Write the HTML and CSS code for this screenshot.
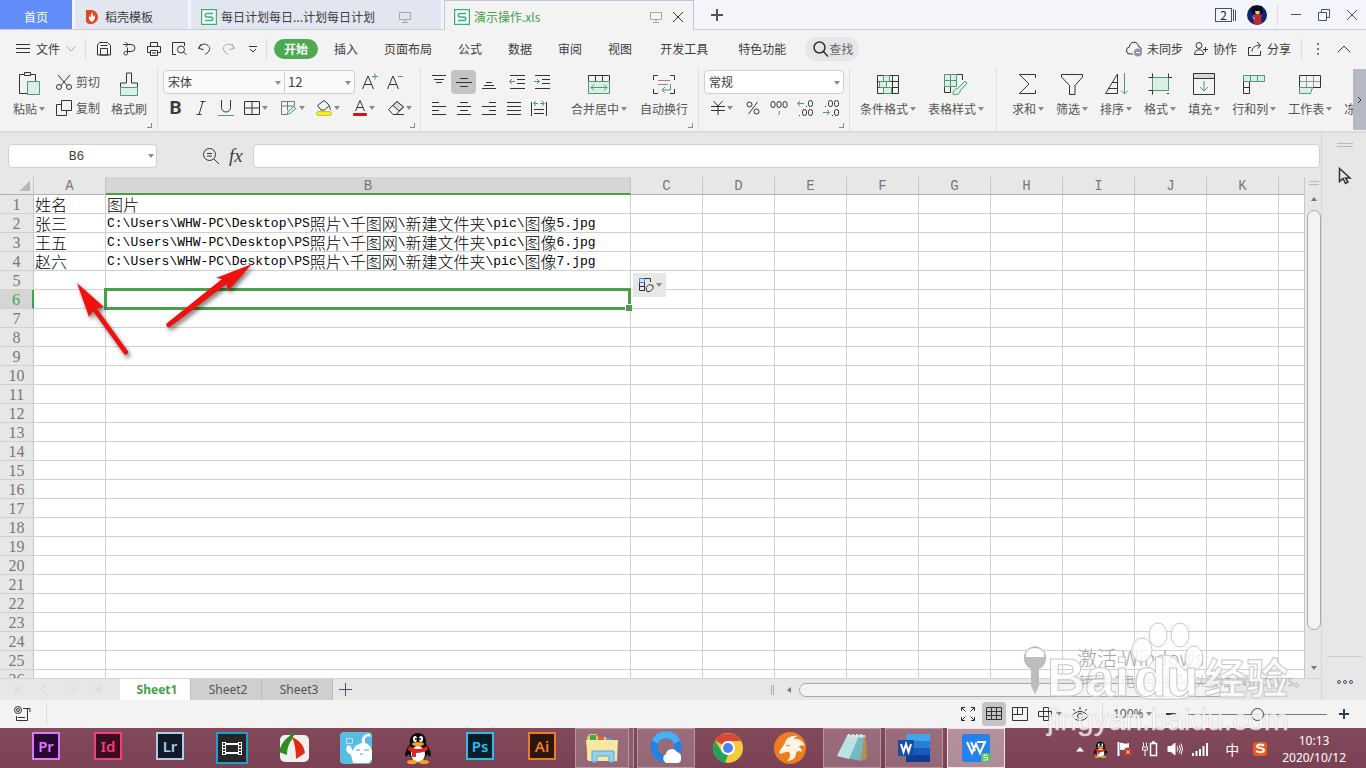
FILE: index.html
```html
<!DOCTYPE html>
<html lang="zh-CN">
<head>
    <meta charset="UTF-8">
    <meta name="viewport" content="width=device-width, initial-scale=1.0">
    <title>演示操作.xls</title>
    <link rel="stylesheet" href="styles.css">
</head>
<body>
    <!-- title bar -->
    <header class="titlebar">
        <button class="tab tab-home">首页</button>
        <button class="tab tab-docer">
            <svg width="14" height="16" viewBox="0 0 14 16"><path d="M1 1h5a7 7 0 0 1 7 7 7 7 0 0 1-7 7H5a4 4 0 0 1-4-4z" fill="#e8441c"/><path d="M7 13C3 11 4 8 4 7l2 2c-1-3 1-5 1-6 1 2 1 4 1 5l2-2c0 3 0 5-3 7z" fill="#fff"/></svg>
            <span>稻壳模板</span>
        </button>
        <button class="tab tab-file">
            <svg width="16" height="16" viewBox="0 0 16 16" class="logo-s"><path d="M.5.5h15v15H.5z"/><path d="M12 4.5H6a1.700 1.700 0 0 0 0 3.500h4a1.700 1.700 0 0 1 0 3.500H4"/></svg>
            <span>每日计划每日...计划每日计划</span>
            <svg width="12" height="12" viewBox="0 0 12 12" class="ic pale screen"><path d="M.5 1.500h11v7H.5zM6 8.500v3M3 11.500h6"/></svg>
        </button>
        <button class="tab tab-file active">
            <svg width="16" height="16" viewBox="0 0 16 16" class="logo-s"><path d="M.5.5h15v15H.5z"/><path d="M12 4.500H6a1.700 1.700 0 0 0 0 3.500h4a1.700 1.700 0 0 1 0 3.500H4"/></svg>
            <span>演示操作.xls</span>
            <svg width="12" height="12" viewBox="0 0 12 12" class="ic pale screen"><path d="M.5 1.500h11v7H.5zM6 8.500v3M3 11.500h6"/></svg>
            <svg width="12" height="12" viewBox="0 0 12 12" class="ic"><path d="M1 1l10 10M11 1L1 11"/></svg>
        </button>
        <button class="tab-add" aria-label="新建">
            <svg width="12" height="12" viewBox="0 0 12 12"><path d="M6 0v12M0 6h12" stroke="#555" stroke-width="2"/></svg>
        </button>
        <div class="window-tools">
            <button class="windows">
                <span>2</span>
                <svg width="5" height="14" viewBox="0 0 5 14" class="ic navy"><path d="M1.500 1v12M3.500 2v11"/></svg>
            </button>
            <button class="avatar" aria-label="账号">
                <svg width="20" height="20" viewBox="0 0 20 20"><circle cx="10" cy="10" r="10" fill="#10246f"/><path d="M5 1h10l1 6-3 2H7L4 7z" fill="#0b0b20"/><path d="M8 6h5l-1 4H9z" fill="#eac4a8"/><path d="M6 10l4-1 5 1-1 4 1 4-4 2-5-2 1-3z" fill="#b92c38"/><path d="M5 11l3 2-1 2z" fill="#e3a592"/></svg>
            </button>
            <i class="sep"></i>
            <button aria-label="最小化"><svg width="12" height="12" viewBox="0 0 12 12" class="ic navy"><path d="M1 5.500h10"/></svg></button>
            <button aria-label="还原"><svg width="12" height="12" viewBox="0 0 12 12" class="ic navy"><path d="M.5 3.500h8v8h-8zM3.500 3.500v-3h8v8h-3"/></svg></button>
            <button aria-label="关闭"><svg width="12" height="12" viewBox="0 0 12 12" class="ic navy"><path d="M1 1l10 10M11 1L1 11"/></svg></button>
        </div>
    </header>

    <!-- menu -->
    <nav class="menubar">
        <button class="file-menu">
            <svg width="14" height="12" viewBox="0 0 14 12" class="ic"><path d="M0 1.500h14M0 5.500h14M0 9.500h14"/></svg>
            <span>文件</span>
            <svg width="10" height="6" viewBox="0 0 10 6" class="ic pale"><path d="M.5.5L5 5 9.500.5"/></svg>
        </button>
        <div class="quick">
            <button aria-label="保存"><svg width="16" height="16" viewBox="0 0 16 16" class="ic"><path d="M1.500 14V4l2-2.500h8l3 3V14zM4.500 14V7.500h7V14M4.500 4.500h7M4 14h8"/></svg></button>
            <button aria-label="输出为PDF"><svg width="16" height="16" viewBox="0 0 16 16" class="ic"><path d="M2 3.500h8a4 3.500 0 0 1 0 7H4.500a1.800 1.800 0 1 0 2 2V6.500M4.500 1L7 3.500 4.500 6"/></svg></button>
            <button aria-label="打印"><svg width="16" height="16" viewBox="0 0 16 16" class="ic"><path d="M4.500 5V1.500h7V5M4 11.500H1.500v-6h13v6H12M4.500 9.500h7v5h-7zM6 12h4"/></svg></button>
            <button aria-label="打印预览"><svg width="16" height="16" viewBox="0 0 16 16" class="ic"><path d="M5 13.500H1.500v-12h12V5"/><circle cx="10" cy="8.500" r="3.500"/><path d="M12.500 11l3 3"/></svg></button>
            <button aria-label="撤销"><svg width="16" height="16" viewBox="0 0 16 16" class="ic"><path d="M5 3L2.500 7.500l5 1M3 7c2-4 6-5 9-2.500s2 6-3 9"/></svg></button>
            <button aria-label="恢复"><svg width="16" height="16" viewBox="0 0 16 16" class="ic pale"><path d="M11 3l2.500 4.500-5 1M13 7c-2-4-6-5-9-2.500s-2 6 3 9"/></svg></button>
            <button aria-label="更多"><svg width="10" height="10" viewBox="0 0 10 10" class="ic"><path d="M1 2.500h8M2 5l3 3 3-3"/></svg></button>
        </div>
        <div class="menus">
            <button class="current">开始</button>
            <button>插入</button>
            <button>页面布局</button>
            <button>公式</button>
            <button>数据</button>
            <button>审阅</button>
            <button>视图</button>
            <button class="wide">开发工具</button>
            <button class="wide">特色功能</button>
            <button class="search">
                <svg width="16" height="16" viewBox="0 0 16 16" class="ic bold"><circle cx="6.500" cy="6.500" r="5.500"/><path d="M10.500 10.500l4.500 5"/></svg>
                <span>查找</span>
            </button>
        </div>
        <div class="share">
            <button><svg width="17" height="16" viewBox="0 0 17 16" class="ic"><path d="M7 13H4.500A3.500 3.500 0 0 1 3.500 6a4.500 4.500 0 0 1 9-.5 3.500 3.500 0 0 1 3 3"/><circle cx="12" cy="11.500" r="4" fill="#8e96ad" stroke="none"/><path d="M10 11.500h4" stroke="#fff"/></svg>未同步</button>
            <button><svg width="16" height="16" viewBox="0 0 16 16" class="ic"><circle cx="6" cy="4.500" r="3"/><path d="M1.500 13.500c0-6 8-6 9-1.500v1.500zM10 8.500h5M12.500 6v5"/></svg>协作</button>
            <button><svg width="16" height="16" viewBox="0 0 16 16" class="ic"><path d="M4 6.500H1.500v8h12V10M5 10.500c0-4 3-6 8-6.500M10 1L13.500 4 11 7.500"/></svg>分享</button>
            <i class="sep"></i>
            <button class="dots" aria-label="更多选项"><svg width="4" height="14" viewBox="0 0 4 14" fill="#555"><circle cx="2" cy="2" r="1"/><circle cx="2" cy="7" r="1"/><circle cx="2" cy="12" r="1"/></svg></button>
            <button aria-label="折叠功能区"><svg width="14" height="8" viewBox="0 0 14 8" class="ic"><path d="M.5 7.500L7 1l6.500 6.500"/></svg></button>
        </div>
    </nav>

    <!-- ribbon -->
    <section class="ribbon">
        <div class="group clip">
            <button class="big">
                <svg width="24" height="26" viewBox="0 0 24 26" class="ic"><path d="M8 3.500H2.500v19H10M14 3.500h4.500V10M7.500 1.500h6v3h-6z"/><path class="g" d="M10.500 10.500h12v13h-12z"/></svg>
                <span class="drop">粘贴</span>
            </button>
            <div class="stack">
                <button class="mini"><svg width="16" height="16" viewBox="0 0 16 16" class="ic"><path d="M2 1l9.500 11M14 1L4.500 12"/><circle cx="3" cy="13" r="2.500"/><circle cx="13" cy="13" r="2.500"/></svg>剪切</button>
                <button class="mini"><svg width="16" height="16" viewBox="0 0 16 16" class="ic"><path d="M5.500.5h10v10h-10zM5 4.500H.5v11h10V11"/></svg>复制</button>
            </div>
            <button class="big">
                <svg width="24" height="26" viewBox="0 0 24 26" class="ic"><path d="M3.500 16v-4h6v-10h5v10h6v4"/><path class="g" d="M3.500 16.500h17v8h-17z"/></svg>
                <span>格式刷</span>
            </button>
            <i class="corner"></i>
        </div>

        <div class="group fonts">
            <div class="stack">
                <div class="row">
                    <label class="pick font"><select aria-label="字体"><option>宋体</option></select></label>
                    <label class="pick size"><select aria-label="字号"><option>12</option></select></label>
                    <button class="tool grow" aria-label="增大字号"><svg width="18" height="18" viewBox="0 0 18 18" class="ic"><path d="M1.500 16L7 3l5.500 13M3.500 11.500h7"/><path class="gl" d="M11 3.500h6M14 .5v6"/></svg></button>
                    <button class="tool" aria-label="减小字号"><svg width="18" height="18" viewBox="0 0 18 18" class="ic"><path d="M1.500 16L7 3l5.500 13M3.500 11.500h7"/><path class="gl" d="M12 3.500h5"/></svg></button>
                </div>
                <div class="row">
                    <button class="tool b" aria-label="加粗"><b>B</b></button>
                    <button class="tool" aria-label="倾斜"><svg width="16" height="16" viewBox="0 0 16 16" class="ic"><path d="M7.500 1.500h5M3.500 14.500h5M10 1.500l-4 13"/></svg></button>
                    <button class="tool" aria-label="下划线"><svg width="16" height="16" viewBox="0 0 16 16" class="ic"><path d="M3.500 0v7.500a4.500 4.500 0 0 0 9 0V0"/><path class="gl" d="M0 15.500h16"/></svg></button>
                    <button class="tool drop" aria-label="边框"><svg width="16" height="16" viewBox="0 0 16 16" class="ic"><path d="M.5 1.500h15v13H.5zM8 1.500v13M.5 8h15"/></svg></button>
                    <button class="tool drop" aria-label="绘图边框"><svg width="17" height="16" viewBox="0 0 17 16" class="ic"><path d="M7 14.500H1.500v-13h13V6M1.500 6h13M7.500 1.500v9" stroke="#777"/><path class="g" d="M7 14.500l1-3 6-5 2 2-6 5z"/></svg></button>
                    <button class="tool drop" aria-label="填充颜色"><svg width="16" height="16" viewBox="0 0 16 16" class="ic"><path d="M1.500 5.500L8 .5l5.500 5-5 4.500H5z"/><path d="M13 6c1 2 2 3 1 4"/><rect x=".5" y="11.500" width="15" height="4" rx="2" fill="#f4ee22" stroke="#c9c432"/></svg></button>
                    <button class="tool drop" aria-label="字体颜色"><svg width="14" height="16" viewBox="0 0 14 16" class="ic"><path d="M2.500 11L7 .5 11.500 11M4 7.500h6"/><rect y="13" width="14" height="3" rx="1" fill="#dd1111" stroke="none"/></svg></button>
                    <button class="tool drop" aria-label="清除"><svg width="16" height="16" viewBox="0 0 16 16" class="ic"><path d="M.5 9.500L9 1.500l6.500 5.500-7.500 7.500H5z"/><path d="M5 5.500l6 5.500 4.500-4L9 1.500z" fill="#ddd"/><path d="M5 14.500h11"/></svg></button>
                </div>
            </div>
            <i class="corner"></i>
        </div>

        <div class="group">
            <div class="stack">
                <div class="row">
                    <button class="tool" aria-label="顶端对齐"><svg width="16" height="16" viewBox="0 0 16 16" class="ic"><path d="M1 1.500h14M3 5.500h10M5 8.500h6"/></svg></button>
                    <button class="tool on" aria-label="垂直居中"><svg width="16" height="16" viewBox="0 0 16 16" class="ic"><path d="M4 4.500h8M0 8.500h16M4 12.500h8"/></svg></button>
                    <button class="tool" aria-label="底端对齐"><svg width="16" height="16" viewBox="0 0 16 16" class="ic"><path d="M5 8.500h6M3 11.500h10M1 14.500h14"/></svg></button>
                    <button class="tool indent" aria-label="减少缩进"><svg width="16" height="16" viewBox="0 0 16 16" class="ic"><path d="M1 1.500h15M8 5.500h8M8 9.500h8M1 14.500h15"/><path class="gl" d="M6 7.500H.5M3 5L.5 7.500 3 10"/></svg></button>
                    <button class="tool" aria-label="增加缩进"><svg width="16" height="16" viewBox="0 0 16 16" class="ic"><path d="M1 1.500h15M8 5.500h8M8 9.500h8M1 14.500h15"/><path class="gl" d="M0 7.500h5.500M3 5l2.500 2.500L3 10"/></svg></button>
                </div>
                <div class="row">
                    <button class="tool" aria-label="左对齐"><svg width="16" height="16" viewBox="0 0 16 16" class="ic"><path d="M1 2.500h7M1 6.500h14M1 10.500h7M1 14.500h14"/></svg></button>
                    <button class="tool" aria-label="居中"><svg width="16" height="16" viewBox="0 0 16 16" class="ic"><path d="M4 2.500h8M1 6.500h14M4 10.500h8M1 14.500h14"/></svg></button>
                    <button class="tool" aria-label="右对齐"><svg width="16" height="16" viewBox="0 0 16 16" class="ic"><path d="M8 2.500h7M1 6.500h14M8 10.500h7M1 14.500h14"/></svg></button>
                    <button class="tool" aria-label="两端对齐"><svg width="16" height="16" viewBox="0 0 16 16" class="ic"><path d="M1 2.500h14M1 6.500h14M1 10.500h14M1 14.500h14"/></svg></button>
                    <button class="tool" aria-label="分散对齐"><svg width="16" height="16" viewBox="0 0 16 16" class="ic"><path d="M.5 2v14M15.500 2v14M3 9.500h10M3 13.500h10"/><path class="gl" d="M3 3.500h4M5 1L2.500 3.500 5 6M9 3.500h4M11 1l2.500 2.500L11 6"/></svg></button>
                </div>
            </div>
            <button class="big merge">
                <svg width="24" height="26" viewBox="0 0 24 26" class="ic"><path d="M1.500 10V4.500h21V10M8.500 4.500V10M15.500 4.500V10"/><path class="g" d="M1.500 10.500h21v12h-21z"/><path class="gl" d="M4 16.500h16M7 13.500l-3 3 3 3M17 13.500l3 3-3 3"/></svg>
                <span class="drop">合并居中</span>
            </button>
            <button class="big wrap">
                <svg width="24" height="26" viewBox="0 0 24 26" class="ic"><path d="M1.500 9V4.500H6M18 4.500h4.500V9M1.500 18v4.500H6M18 22.500h4.500V18"/><path d="M6 9.500h12M6 13.500h10" stroke="#a67a86"/><path class="gl" d="M18.500 13v6H10M13 16l-3 3 3 3"/></svg>
                <span>自动换行</span>
            </button>
            <i class="corner"></i>
        </div>

        <div class="group">
            <div class="stack">
                <div class="row">
                    <label class="pick format"><select aria-label="数字格式"><option>常规</option></select></label>
                </div>
                <div class="row nums">
                    <button class="tool drop" aria-label="货币"><svg width="14" height="16" viewBox="0 0 14 16" class="ic"><path d="M2.500 1L7 6l4.500-5M0 6.500h14M0 10.500h14M7 6v9"/></svg></button>
                    <button class="tool" aria-label="百分比"><svg width="14" height="16" viewBox="0 0 14 16" class="ic"><circle cx="3.500" cy="4.500" r="2.500"/><circle cx="10.500" cy="11.500" r="2.500"/><path d="M11.500 2l-9 12"/></svg></button>
                    <button class="tool" aria-label="千位分隔"><svg width="18" height="16" viewBox="0 0 18 16" class="ic"><rect x="1" y="1.500" width="4" height="6" rx="2"/><rect x="7" y="1.500" width="4" height="6" rx="2"/><rect x="13" y="1.500" width="4" height="6" rx="2"/><path class="gl" d="M9.500 11v2l-1 2"/></svg></button>
                    <button class="tool" aria-label="增加小数位"><svg width="18" height="18" viewBox="0 0 18 18" class="ic"><path class="gl" d="M8 4.500H2M4 2L1.500 4.500 4 7"/><path d="M10 7.500h1M3 16.500h1"/><rect x="12.500" y="1.500" width="4" height="6" rx="2"/><rect x="6.500" y="10.500" width="4" height="6" rx="2"/><rect x="12.500" y="10.500" width="4" height="6" rx="2"/></svg></button>
                    <button class="tool" aria-label="减少小数位"><svg width="18" height="18" viewBox="0 0 18 18" class="ic"><path class="gl" d="M1 13.500h6M5 11l2.500 2.500L5 16"/><path d="M3 7.500h1M10 16.500h1"/><rect x="6.500" y="1.500" width="4" height="6" rx="2"/><rect x="12.500" y="1.500" width="4" height="6" rx="2"/><rect x="12.500" y="10.500" width="4" height="6" rx="2"/></svg></button>
                </div>
            </div>
            <i class="corner"></i>
        </div>

        <div class="group styles">
            <button class="big">
                <svg width="24" height="26" viewBox="0 0 24 26" class="ic"><path d="M1.500 4.500h21v18h-21zM1.500 10.500h21M1.500 16.500h21M7.500 4.500v18M16.500 4.500v18"/><path class="g" d="M7.500 4.500h6v6h-6zM3.500 10.500h7v6h-7zM7.500 16.500h8v6h-8z"/></svg>
                <span class="drop">条件格式</span>
            </button>
            <button class="big">
                <svg width="26" height="26" viewBox="0 0 26 26" class="ic"><path d="M1.500 16v5.500h6V16M14 3.500h5.500V9"/><path class="g" d="M1.500 3.500h12v12h-12zM7.500 3.500v12M1.500 9.500h12"/><path class="g" d="M10 23.500c0-4 2-6 4.500-6L22 10l2 2-7 8c0 3-3 4-7 3.500z"/></svg>
                <span class="drop">表格样式</span>
            </button>
        </div>

        <div class="group last">
            <button class="big">
                <svg width="24" height="26" viewBox="0 0 24 26" class="ic"><path d="M19.500 7V3.500h-16L13 13 3.500 22.500h16V19"/></svg>
                <span class="drop">求和</span>
            </button>
            <button class="big">
                <svg width="24" height="26" viewBox="0 0 24 26" class="ic"><path d="M1.500 3.500h21V6L15 14.500v9H9.500v-9L1.500 6z"/></svg>
                <span class="drop">筛选</span>
            </button>
            <button class="big">
                <svg width="24" height="26" viewBox="0 0 24 26" class="ic"><path d="M1.500 22.500L13.500 3v19.500zM4 17.500h9.500M8 11.500h5.500"/><path class="gl" d="M20.500 2v21M17 19.500l3.500 3.500 3.500-3.500"/></svg>
                <span class="drop">排序</span>
            </button>
            <button class="big">
                <svg width="24" height="26" viewBox="0 0 24 26" class="ic"><path class="g" d="M4.500 6.500h16v13h-16z"/><path d="M.5 6.500h4v-4M20.500 2.500v4h3.500M.5 19.500h4v4M19 22.500h2"/></svg>
                <span class="drop">格式</span>
            </button>
            <button class="big">
                <svg width="24" height="26" viewBox="0 0 24 26" class="ic"><path d="M1.500 2.500h21v21h-21z"/><path d="M1.500 2.500h21v5h-21z" fill="#d8d8d8"/><path class="gl" d="M12 10v10M8 16l4 4 4-4"/></svg>
                <span class="drop">填充</span>
            </button>
            <button class="big">
                <svg width="24" height="26" viewBox="0 0 24 26" class="ic"><path d="M1.500 10v12.500h6V10M1.500 16.500h6"/><path class="g" d="M1.500 4.500h21v6h-21zM8.500 4.500v6M15.500 4.500v6"/></svg>
                <span class="drop">行和列</span>
            </button>
            <button class="big">
                <svg width="24" height="26" viewBox="0 0 24 26" class="ic"><path d="M8.500 4.500v12M15.500 4.500v12M1.500 10.500h21" stroke="#999"/><path d="M1.500 16V4.500h21v12H15"/><path class="g" d="M1.500 16.500h13l-2 6h-11z"/></svg>
                <span class="drop">工作表</span>
            </button>
            <button class="big">
                <svg width="24" height="26" viewBox="0 0 24 26"></svg>
                <span class="drop">冻结窗格</span>
            </button>
        </div>
        <button class="ribbon-next" aria-label="向右滚动"><svg width="5" height="8" viewBox="0 0 5 8" class="ic"><path d="M1 1l3 3-3 3"/></svg></button>
    </section>

    <main class="main">
        <div class="workspace">
            <div class="formula">
                <label class="namebox"><input type="text" value="B6" aria-label="名称框"></label>
                <svg width="18" height="18" viewBox="0 0 18 18" class="ic lens"><circle cx="7.500" cy="7.500" r="6"/><path d="M12 12l5 5M5 6.500h5M5 9h5"/></svg>
                <span class="fx">fx</span>
                <input class="formula-input" type="text" aria-label="编辑栏">
            </div>

            <div class="sheet">
                <div class="cells">
                    <table class="grid">
                        <colgroup><col class="c-num"><col class="c-a"><col class="c-b"><col span="9" class="c-a"><col></colgroup>
                        <thead><tr id="gridHead"></tr></thead>
                        <tbody id="gridBody"></tbody>
                    </table>
                </div>
                <div class="vscroll">
                    <i class="grip"></i>
                    <i class="arrow up"></i>
                    <i class="thumb"></i>
                    <i class="arrow down"></i>
                </div>
            </div>

            <div class="sheetbar">
                <div class="sheet-nav">
                    <svg width="100" height="10" viewBox="0 0 100 10" class="ic"><path d="M6 .5v9M12 .5L8 5l4 4.500M36 .5L31 5l5 4.500M60 .5L65 5l-5 4.500M84 .5L88 5l-4 4.500M90 .5v9"/></svg>
                </div>
                <button class="sheet-tab current">Sheet1</button>
                <button class="sheet-tab">Sheet2</button>
                <button class="sheet-tab">Sheet3</button>
                <button class="sheet-add" aria-label="新建工作表"><svg width="13" height="13" viewBox="0 0 13 13" class="ic navy"><path d="M6.500 0v13M0 6.500h13"/></svg></button>
                <div class="hscroll"><i class="vgrip"></i><i class="arrow left"></i><i class="thumb"></i></div>
            </div>
        </div>

        <aside class="sidepane">
            <i class="grip"></i>
            <svg width="14" height="18" viewBox="0 0 14 18" class="ic bold cursor"><path d="M1.500 1.500v13l3.500-3 2.500 5 2.500-1.500L7.500 11H12z"/></svg>
            <button class="more" aria-label="更多"><svg width="18" height="6" viewBox="0 0 18 6" class="ic navy"><circle cx="3" cy="3" r="1.500"/><circle cx="9" cy="3" r="1.500"/><circle cx="15" cy="3" r="1.500"/></svg></button>
        </aside>
    </main>

    <!-- status bar -->
    <footer class="status">
        <svg width="18" height="16" viewBox="0 0 18 16" class="ic"><circle cx="4" cy="4" r="3.500"/><circle cx="4" cy="4" r="1.500"/><path d="M9 2.500h7V6M13.500 2.500v12M2.500 10v4.500h11M4 11.500h7"/></svg>
        <i class="sep"></i>
        <div class="status-tools">
            <button aria-label="全屏"><svg width="16" height="16" viewBox="0 0 16 16" class="ic"><path d="M1.500 5V1.500H5M1.500 1.500l4 4M11 1.500h3.500V5M14.500 1.500l-4 4M1.500 11v3.500H5M1.500 14.500l4-4M11 14.500h3.500V11M14.500 14.500l-4-4"/></svg></button>
            <button class="on" aria-label="普通视图"><svg width="16" height="14" viewBox="0 0 16 14" class="ic"><path d="M.5.5h15v12H.5zM.5 4.500h15M.5 8.500h15M5.500.5v12M10.500.5v12"/></svg></button>
            <button class="page" aria-label="页面视图"><svg width="16" height="14" viewBox="0 0 16 14" class="ic"><path d="M.5.5h15v13H.5zM5.500.5v7M10.500.5v7M.5 7.500h10"/></svg></button>
            <button class="drop" aria-label="阅读模式"><svg width="16" height="14" viewBox="0 0 16 14" class="ic"><path d="M5.500.5h5v13h-5zM.5 4.500h13v5H.5z"/></svg></button>
            <button class="eye" aria-label="护眼模式"><svg width="18" height="16" viewBox="0 0 18 16" class="ic"><path d="M1 10c4-6 12-6 16 0-4 6-12 6-16 0zM2 3l2 2M9 1v3M16 3l-2 2"/><circle cx="9" cy="10" r="2.500"/></svg></button>
            <i class="sep"></i>
            <button class="drop zoom">100%</button>
            <button aria-label="缩小"><svg width="12" height="12" viewBox="0 0 12 12"><path d="M1 6h10" stroke="#2d3f5a" stroke-width="2"/></svg></button>
            <input type="range" class="zoom-range" min="0" max="100" value="50" aria-label="显示比例">
            <button aria-label="放大"><svg width="12" height="12" viewBox="0 0 12 12"><path d="M1 6h10M6 1v10" stroke="#2d3f5a" stroke-width="2"/></svg></button>
        </div>
    </footer>

    <!-- taskbar -->
    <div class="taskbar">
        <button class="app adobe pr">Pr</button>
        <button class="app adobe id">Id</button>
        <button class="app adobe lr">Lr</button>
        <button class="app" aria-label="视频工具"><svg width="32" height="32" viewBox="0 0 32 32"><path d="M1 1h30v30H1z" fill="#262626" stroke="#1ba0cf" stroke-width="2"/><path d="M6 10h4v13H6zM22 10h4v13h-4z" fill="#fff"/><path d="M10 12h12M10 21h12" stroke="#fff" stroke-width="2"/><path d="M8 11v12M24 11v12" stroke="#262626" stroke-width="2" stroke-dasharray="2 1"/></svg></button>
        <button class="app" aria-label="截图工具"><svg width="32" height="32" viewBox="0 0 32 32"><rect x="2" y="3" width="29" height="27" rx="5" fill="#f1efee"/><path d="M14 3C7 6 3 12 1 20l8 3c0-7 2-12 6-17z" fill="#2d8d21"/><path d="M14 5c7 3 12 8 13 16l-9 6c0-8-1-15-4-22z" fill="#e22a13"/><path d="M11 7l5-6" stroke="#2d8d21" stroke-width="3"/></svg></button>
        <button class="app" aria-label="桌面助手"><svg width="32" height="32" viewBox="0 0 32 32"><rect width="32" height="32" rx="4" fill="#59bde3"/><path d="M13 31l-2-8-4-3c-2-5 1-9 4-5l2 4c1-5 5-7 9-8-1-6 3-10 8-9l1 3c-4-2-7 1-6 6 4 1 6 4 7 8v8l-3 4z" fill="#fff"/><path d="M16 18h4M24 18h5M20 22h3" stroke="#419dc4"/><path d="M6.500 6.500h6v5h-6z" fill="none" stroke="#b9e3f4"/></svg></button>
        <button class="app" aria-label="QQ"><svg width="28" height="32" viewBox="0 0 28 32"><use href="#penguin"/></svg></button>
        <button class="app adobe ps">Ps</button>
        <button class="app adobe ai">Ai</button>
        <button class="app open stacked" aria-label="文件资源管理器"><svg width="34" height="32" viewBox="0 0 34 32"><path d="M2 5l3-3h6l2 3h8v3h11v20H2z" fill="#e5cb73"/><path d="M5 3h6v5H5z" fill="#42a747"/><path d="M13 5h6v5h-6z" fill="#e95d3a"/><path d="M21 6h5v4h-5z" fill="#4f9fe4"/><path d="M1 8h32l-1 21H3z" fill="#f7e7a1"/><path d="M7 30V19h22v11h-5v-6H12v6z" fill="#93d3ee" stroke="#5aa9cd"/></svg></button>
        <button class="app open" aria-label="QQ浏览器"><svg width="34" height="34" viewBox="0 0 34 34"><circle cx="17" cy="16" r="12" fill="none" stroke="#2381e8" stroke-width="7"/><path d="M6 11a12 12 0 0 1 22 0" fill="none" stroke="#48aef6" stroke-width="7"/><path d="M17 32a5 5 0 0 1 0-9 6 6 0 0 1 11-2 5 5 0 0 1 4 6 4 4 0 0 1-3 5z" fill="#fff"/></svg></button>
        <button class="app" aria-label="Chrome"><svg width="30" height="30" viewBox="0 0 30 30"><circle cx="15" cy="15" r="15" fill="#f7ca3d"/><path d="M15 15L2 7.500A15 15 0 0 1 28 8H15z" fill="#d9483b"/><path d="M2 7.500L9 19l6 3-3 8A15 15 0 0 1 2 7.500z" fill="#24a25a"/><circle cx="15" cy="15" r="7" fill="#fff"/><circle cx="15" cy="15" r="5" fill="#4a83ef"/></svg></button>
        <button class="app" aria-label="UC浏览器"><svg width="32" height="32" viewBox="0 0 32 32"><circle cx="16" cy="16" r="16" fill="#ef7d20"/><path d="M5 20l6-9c1-5 6-8 13-7-3 1-4 2-4 3 5-1 9 2 11 7-3-1-5-1-6 1 2 1 3 3 3 5-3-2-6-1-6 2 0 4-4 7-9 7 3-3 4-6 2-9-3-1-6 2-9 2z" fill="#fff3e6"/><path d="M12 13l4 1" stroke="#ef7d20"/></svg></button>
        <button class="app open" aria-label="记事本"><svg width="32" height="30" viewBox="0 0 32 30"><path d="M11 3h19l1 22-4 3z" fill="#b68d54"/><path d="M11 3h17l-3 25-24-5z" fill="#76b7c1"/><path d="M11 3h12L13 26 1 23z" fill="#bce3e4"/><path d="M11 3h18M13 1v4M17 1v4M21 1v4M25 1v4" stroke="#dcdedf" stroke-width="2"/></svg></button>
        <button class="app open" aria-label="Word"><svg width="34" height="30" viewBox="0 0 34 30"><path d="M9 1h24v7H9z" fill="#41a5ee"/><path d="M9 8h24v7H9z" fill="#2b7cd3"/><path d="M9 15h24v7H9z" fill="#185abd"/><path d="M9 22h24v7H9z" fill="#103f91"/><path d="M1 7h16v16H1z" fill="#154fa8"/><path d="M4 11l2.500 8L9 11l2.500 8 2.500-8" fill="none" stroke="#fff" stroke-width="2"/></svg></button>
        <button class="app open focus" aria-label="WPS"><svg width="30" height="30" viewBox="0 0 30 30"><rect x="1" y="1" width="28" height="28" rx="3" fill="#2382ee"/><path d="M6 9l5 11 4-9 4 9 5-11h-8M10 9l4 9" fill="none" stroke="#fff" stroke-width="2"/><rect x="20" y="20" width="9" height="9" rx="2" fill="#57bf5c"/><path d="M27 22h-4v2.500h3.500V27H22" fill="none" stroke="#fff"/></svg></button>

        <div class="tray">
            <svg width="8" height="5" viewBox="0 0 8 5"><path d="M4 0l4 4.500H0z" fill="#fff"/></svg>
            <svg width="15" height="17" viewBox="0 0 28 32"><use href="#penguin"/></svg>
            <svg width="16" height="16" viewBox="0 0 16 16"><path d="M1.500 1v14" stroke="#fff" stroke-width="2"/><path d="M3 2c3-1 4 2 9 0v7c-4 2-6-1-9 0z" fill="#fff"/><circle cx="11" cy="11" r="4.500" fill="#cf3529"/><path d="M9 9l4 4M13 9l-4 4" stroke="#fff"/></svg>
            <svg width="16" height="16" viewBox="0 0 16 16" fill="none" stroke="#fff"><path d="M8.500 2.500h6v12h-6zM10 1h3" stroke-width="1.500"/><path d="M1.500 1.500v4M4.500 1.500v4M.5 6h5v3h-5zM3 9v6"/></svg>
            <svg width="16" height="16" viewBox="0 0 16 16" fill="none" stroke="#fff"><path d="M1 5.500h3L8 2v12l-4-3.500H1z" fill="#fff"/><path d="M10 5.500q2 2.500 0 5M12 4q3 4 0 8M14 2.500q3 5.500 0 11"/></svg>
            <svg width="16" height="14" viewBox="0 0 16 14" stroke="#fff" stroke-width="2"><path d="M1 14v-3M4.500 14V9M8 14V7M11.500 14V4M15 14V1"/></svg>
            <span class="ime">中</span>
            <svg width="16" height="16" viewBox="0 0 16 16"><rect x="1" y="1" width="14" height="14" rx="3" fill="#ec5a24"/><path d="M12 4.500c-3-1.500-7-1-7 1s7 1 7 3.500-5 3-8 1" fill="none" stroke="#fff" stroke-width="2"/></svg>
            <time class="clock"><span>10:13</span><span>2020/10/12</span></time>
        </div>
    </div>

    <!-- red pointers over the cells -->
    <svg class="pointers" width="280" height="380" viewBox="0 0 280 380">
        <path d="M77 283l27 24-7 1.500 31.500 43.500q-1 3.500-4 2.500L93 311l-4 6z"/>
        <path d="M252 264l-24 27-1.500-7-57 43.500q-4 0-3-4L222 279l-6-1z"/>
    </svg>

    <svg class="watermark" width="290" height="130" viewBox="0 0 290 130">
        <g class="activate">
            <path d="M20 30a12 12 0 0 0-4 23v17l4 8 4-8V53a12 12 0 0 0-4-23z"/>
            <path d="M11 41h18v-3a9 6 0 0 0-18 0z" fill="#fff"/>
            <text x="62" y="50" class="act-big">激活 Windows</text>
            <text x="64" y="70" class="act-small">转到“电脑设置”以激活 Windows。</text>
        </g>
        <g class="brand">
            <ellipse cx="127" cy="34" rx="10" ry="12"/>
            <ellipse cx="143" cy="19" rx="9" ry="12"/>
            <ellipse cx="165" cy="19" rx="9" ry="12"/>
            <ellipse cx="179" cy="42" rx="9" ry="12"/>
            <path d="M150 39c12 0 14 12 24 19s8 24-8 25c-8 0-24 0-32 0-16-1-18-18-8-25s12-19 24-19z"/>
            <text x="32" y="80" class="brand-latin">Bai</text>
            <text x="119" y="80" class="brand-latin">du</text>
            <text x="189" y="78" class="brand-cjk">经验</text>
        </g>
        <text x="32" y="114" class="site">jingyan.baidu.com</text>
    </svg>

    <svg class="defs" width="0" height="0">
        <symbol id="penguin" viewBox="0 0 28 32">
            <path d="M14 1c6 0 9 5 8 11 4 5 6 11 4 13l-3-3c-1 4-5 7-9 7s-8-3-9-7l-3 3c-2-2 0-8 4-13C5 6 8 1 14 1z" fill="#0c0c0c"/>
            <ellipse cx="14" cy="22" rx="7" ry="8" fill="#fff"/>
            <path d="M5 14c6 4 12 4 18 0l1 4c-4 2-7 3-12 3v4H8v-5l-4-2z" fill="#e02424"/>
            <ellipse cx="11" cy="7" rx="2" ry="3" fill="#fff"/><ellipse cx="17" cy="7" rx="2" ry="3" fill="#fff"/>
            <circle cx="12" cy="7" r="1"/><circle cx="16" cy="7" r="1"/>
            <ellipse cx="14" cy="12" rx="6" ry="2" fill="#f5a51c"/>
            <ellipse cx="8" cy="30" rx="5" ry="2" fill="#f5a51c"/><ellipse cx="20" cy="30" rx="5" ry="2" fill="#f5a51c"/>
        </symbol>
    </svg>

    <script>
        const columns = ['A', 'B', 'C', 'D', 'E', 'F', 'G', 'H', 'I', 'J', 'K', ''];
        const folder = 'C:\\Users\\WHW-PC\\Desktop\\PS照片\\千图网\\新建文件夹\\pic\\';
        const data = {
            1: ['姓名', '图片'],
            2: ['张三', folder + '图像5.jpg'],
            3: ['王五', folder + '图像6.jpg'],
            4: ['赵六', folder + '图像7.jpg']
        };
        const rowCount = 26;
        const selected = { column: 'B', row: 6 };

        // half-width characters get their own size so that two match one full-width
        function cellHtml(text) {
            return text.replace(/[\x20-\x7e]+/g, '<span class="half">$&</span>');
        }

        const pasteButton = '<button class="paste-options" aria-label="粘贴选项">' +
            '<svg width="16" height="16" viewBox="0 0 16 16" class="ic"><path d="M1.500 5v8.500H7M6 1.500h6.500V5M1.500 9.500H6M6.500 5v8"/>' +
            '<path d="M1.500 1.500h5v4h-5z" fill="#cfe0fb" stroke="#4f7fd0"/><path d="M8 10.500l3-3 4 1v3l-3 3h-3z"/></svg></button>';

        document.getElementById('gridHead').innerHTML = '<th class="all"></th>' + columns.map(name =>
            `<th class="${name === selected.column ? 'selected' : ''}">${name}</th>`).join('');

        let html = '';
        for (let r = 1; r <= rowCount; r++) {
            const values = data[r] || [];
            html += `<tr><th class="${r === selected.row ? 'selected' : ''}">${r}</th>`;
            columns.forEach((name, i) => {
                if (name === selected.column && r === selected.row) {
                    html += `<td class="active-cell">${pasteButton}</td>`;
                } else {
                    html += `<td>${cellHtml(values[i] || '')}</td>`;
                }
            });
            html += '</tr>';
        }
        document.getElementById('gridBody').innerHTML = html;
    </script>
</body>
</html>
```
FILE: styles.css
```css
* {
    box-sizing: border-box;
}

body {
    margin: 0;
    height: 100vh;
    display: flex;
    flex-direction: column;
    overflow: hidden;
    position: relative;
    background-color: #f3f3f3;
    color: #3c3c3c;
    font-family: "Noto Sans CJK SC", sans-serif;
    font-size: 12px;
    line-height: 16px;
}

button, input, select {
    font: inherit;
    color: inherit;
    border: 0;
    margin: 0;
    padding: 0;
    background: none;
}

button {
    display: flex;
    align-items: center;
    justify-content: center;
    white-space: nowrap;
    flex-shrink: 0;
}

svg {
    display: block;
    flex-shrink: 0;
}

.defs {
    position: absolute;
}

/* icons */
.ic {
    fill: none;
    stroke: #333;
    stroke-width: 1;
}

.ic.bold {
    stroke-width: 1.5;
}

.ic.pale {
    stroke: #a3a6ae;
}

.ic.navy {
    stroke: #46516e;
}

.ic .g {
    fill: #dcefe4;
    stroke: #4f9a72;
}

.ic .gl {
    stroke: #4f9a72;
}

.logo-s {
    fill: #fff;
    stroke: #35b07d;
    stroke-width: 1.5;
}

.sep {
    width: 1px;
    height: 22px;
    background-color: #dcdcdc;
}

.drop::after {
    content: "";
    border: 3px solid transparent;
    border-top: 4px solid #8a8a8a;
    border-bottom: 0;
    margin-left: 2px;
    flex-shrink: 0;
}

/* title bar */
.titlebar {
    height: 30px;
    display: flex;
    background-color: #f3f5fa;
    border-bottom: 1px solid #c5ccda;
    flex-shrink: 0;
}

.tab {
    justify-content: flex-start;
    background-color: #e2e6f0;
    margin-right: 3px;
    padding: 4px 10px 0;
    gap: 4px;
}

.tab-home {
    width: 72px;
    justify-content: center;
    background-color: #628df8;
    color: #fff;
}

.tab-docer {
    width: 113px;
    gap: 6px;
}

.tab-file {
    width: 250px;
}

.tab.active {
    height: 30px;
    background-color: #f3f3f3;
    border: 1px solid #bfc6d6;
    border-bottom: 0;
    color: #45a045;
    padding: 3px 9px 0;
    margin-right: 0;
}

.screen {
    margin-left: auto;
    margin-right: 20px;
}

.active .screen {
    margin-right: 6px;
}

.tab-add {
    width: 46px;
}

.window-tools {
    margin-left: auto;
    display: flex;
    align-items: center;
    gap: 16px;
    padding-right: 8px;
}

.windows span {
    width: 17px;
    height: 14px;
    border: 1px solid #46516e;
    color: #222;
    line-height: 12px;
}

.window-tools .avatar {
    margin-left: -6px;
    margin-right: -6px;
}

.window-tools .sep {
    margin-right: -4px;
}

/* menu */
.menubar {
    height: 38px;
    display: flex;
    align-items: center;
    flex-shrink: 0;
}

.file-menu {
    gap: 6px;
    padding: 0 9px 0 16px;
    height: 22px;
    border-right: 1px solid #dcdcdc;
}

.quick {
    display: flex;
    padding: 0 1px 0 5px;
    border-right: 1px solid #dcdcdc;
    height: 22px;
}

.quick button {
    width: 25px;
}

.quick button:last-child {
    width: 24px;
}

.menus {
    display: flex;
    align-items: center;
    padding-left: 7px;
}

.menus button {
    height: 20px;
    padding: 0 13px;
}

.menus .wide {
    padding: 0 15px;
}

.menus .current {
    background-color: #4cab50;
    border-radius: 10px;
    color: #fff;
    font-weight: bold;
    padding: 0 10px;
    margin-right: 3px;
}

.menus .search {
    height: 24px;
    padding: 0 6px 0 8px;
    margin-left: 4px;
    border-radius: 12px;
    background-color: #e5e6e9;
    color: #666;
}

.share {
    margin-left: auto;
    display: flex;
    align-items: center;
    gap: 10px;
    padding-right: 15px;
}

.share button {
    gap: 4px;
}

.share .dots {
    margin: 0 7px 0 4px;
}

/* ribbon */
.ribbon {
    height: 65px;
    display: flex;
    overflow: hidden;
    position: relative;
    border-bottom: 2px solid #dadada;
    flex-shrink: 0;
}

.group {
    display: flex;
    position: relative;
    padding: 1px 5px 0;
    border-right: 1px solid #dfdfdf;
    flex-shrink: 0;
}

.clip {
    width: 158px;
    padding-left: 13px;
    gap: 11px;
}

.fonts {
    padding-right: 2px;
}

.corner {
    position: absolute;
    right: 5px;
    bottom: 3px;
    width: 5px;
    height: 5px;
    border-right: 1px solid #888;
    border-bottom: 1px solid #888;
}

.stack {
    display: flex;
    flex-direction: column;
}

.row {
    display: flex;
    height: 26px;
    align-items: center;
}

.big {
    flex-direction: column;
    justify-content: flex-start;
    color: #555;
    padding-top: 2px;
    gap: 4px;
}

.big span {
    display: flex;
    align-items: center;
}

.mini {
    height: 26px;
    gap: 4px;
    color: #555;
}

.tool {
    width: 25px;
    height: 24px;
}

.tool.drop {
    width: 36px;
}

.tool.on, .status .on {
    background-color: #c4c4c4;
    border-radius: 4px;
}

.tool.b {
    font-family: Roboto, sans-serif;
    font-size: 19px;
}

.grow {
    margin-left: 2px;
}

.indent {
    margin-left: 3px;
}

.merge {
    margin-left: 17px;
}

.wrap {
    margin: 0 5px 0 13px;
}

.nums .tool {
    width: 26px;
}

.nums .drop {
    width: 36px;
}

.styles {
    gap: 12px;
    padding: 1px 12px 0 10px;
}

.last {
    gap: 12px;
    padding-left: 15px;
    border-right: 0;
}

.pick {
    position: relative;
    height: 24px;
    background-color: #fafafa;
    border: 1px solid #cfcfcf;
    border-radius: 4px;
}

.pick::after, .namebox::after {
    content: "";
    position: absolute;
    right: 3px;
    top: 10px;
    border: 3px solid transparent;
    border-top: 4px solid #8a8a8a;
    border-bottom: 0;
}

.pick select {
    appearance: none;
    width: 100%;
    height: 100%;
    padding-left: 4px;
}

.font {
    width: 122px;
    border-radius: 4px 0 0 4px;
}

.size {
    width: 70px;
    border-left: 0;
    border-radius: 0 4px 4px 0;
}

.size select {
    padding-left: 3px;
    font-size: 13px;
}

.format {
    width: 140px;
    background-color: #fff;
}

.ribbon-next {
    position: absolute;
    right: 0;
    top: 1px;
    width: 13px;
    height: 61px;
    background-color: #b5b9c3;
}

/* workspace */
.main {
    flex: 1;
    min-height: 0;
    display: flex;
    background-color: #e7e7e7;
}

.workspace {
    flex: 1;
    min-width: 0;
    display: flex;
    flex-direction: column;
}

.formula {
    display: flex;
    align-items: center;
    height: 44px;
    padding: 2px 1px 0 8px;
    flex-shrink: 0;
}

.namebox {
    position: relative;
    width: 149px;
    height: 24px;
}

.namebox input {
    width: 100%;
    height: 100%;
    padding-right: 12px;
    background-color: #fff;
    border: 1px solid #d0d0d0;
    border-radius: 4px;
    text-align: center;
    font-family: "Liberation Mono", monospace;
    font-size: 13px;
}

.lens {
    margin-left: 45px;
}

.fx {
    margin-left: 9px;
    width: 24px;
    font-family: "Liberation Serif", serif;
    font-style: italic;
    font-size: 19px;
}

.formula-input {
    flex: 1;
    height: 24px;
    padding: 0 6px;
    background-color: #fff;
    border: 1px solid #d0d0d0;
    border-radius: 4px;
}

.sheet {
    flex: 1;
    min-height: 0;
    display: flex;
}

.cells {
    flex: 1;
    min-width: 0;
    overflow: hidden;
    border-right: 1px solid #c8c8c8;
}

.grid {
    width: 100%;
    table-layout: fixed;
    border-collapse: separate;
    border-spacing: 0;
    background-color: #fff;
}

.c-num {
    width: 34px;
}

.c-a {
    width: 72px;
}

.c-b {
    width: 525px;
}

.grid th {
    height: 19px;
    padding: 2px 0 0;
    background-color: #e7e7e7;
    border-right: 1px solid #c6c6c6;
    border-bottom: 1px solid #d0d0d0;
    color: #777;
    font-family: "Liberation Serif", serif;
    font-size: 16px;
    line-height: 16px;
    font-weight: normal;
}

.grid thead th {
    height: 18px;
    line-height: 15px;
    border-bottom-color: #b0b0b0;
    font-family: "Liberation Mono", monospace;
    font-size: 14px;
}

.grid .all {
    background-image: linear-gradient(135deg, transparent 50%, #b8b8b8 50%);
    background-size: 11px 11px;
    background-position: right 3px bottom 3px;
    background-repeat: no-repeat;
}

.grid thead .selected {
    background-color: #d5d5d5;
    border-bottom: 2px solid #4a9f4a;
    line-height: 14px;
}

.grid tbody .selected {
    background-color: #d5d5d5;
    border-right: 2px solid #4a9f4a;
    color: #45a045;
}

.grid td {
    height: 19px;
    padding: 1px 0 0 1px;
    border-right: 1px solid #d0d0d0;
    border-bottom: 1px solid #d0d0d0;
    color: #000;
    font-size: 16px;
    line-height: 17px;
    font-weight: 300;
    white-space: nowrap;
}

.grid tr > :last-child {
    border-right: 0;
}

.half {
    font-family: "Liberation Mono", monospace;
    font-size: 13px;
    line-height: 17px;
    vertical-align: top;
}

.active-cell {
    position: relative;
}

.active-cell::before {
    content: "";
    position: absolute;
    inset: -2px -1px -2px -2px;
    border: 3px solid #4a9f4a;
}

.active-cell::after {
    content: "";
    position: absolute;
    right: -2px;
    bottom: -3px;
    width: 6px;
    height: 6px;
    background-color: #4a9f4a;
    border-top: 1px solid #fff;
    border-left: 1px solid #fff;
}

.paste-options {
    position: absolute;
    left: calc(100% + 3px);
    top: -17px;
    width: 33px;
    height: 24px;
    background-color: #e7e7e7;
}

.paste-options::after {
    content: "";
    margin-left: 2px;
    border: 3px solid transparent;
    border-top: 4px solid #8a8a8a;
    border-bottom: 0;
}

/* scrollbars */
.grip {
    height: 4px;
    border-top: 1px solid #b8b8b8;
    border-bottom: 1px solid #b8b8b8;
}

.arrow {
    border: 3px solid transparent;
}

.arrow.up {
    border-top: 0;
    border-bottom: 4px solid #777;
}

.arrow.down {
    border-bottom: 0;
    border-top: 4px solid #777;
}

.arrow.left {
    border-left: 0;
    border-right: 4px solid #777;
}

.vscroll {
    width: 16px;
    padding: 4px 1px 8px 2px;
    display: flex;
    flex-direction: column;
    align-items: center;
}

.vscroll .grip {
    width: 10px;
    margin-bottom: 12px;
}

.vscroll .thumb {
    width: 14px;
    flex: 1;
    margin: 9px 0 36px;
    background-color: #f3f3f3;
    border: 1px solid #a8a8a8;
    border-radius: 7px;
}

.sheetbar {
    height: 22px;
    display: flex;
    flex-shrink: 0;
    border-top: 1px solid #d4d4d4;
}

.sheet-nav {
    width: 120px;
    padding: 5px 10px;
    opacity: 0.1;
}

.sheet-tab {
    width: 71px;
    padding-left: 4px;
    background-color: #cfcfcf;
    border-right: 1px solid #bcbcbc;
    color: #555;
    font-family: "Noto Sans", sans-serif;
}

.sheet-tab.current {
    background-color: #fff;
    color: #45a045;
    font-weight: bold;
}

.sheet-add {
    width: 24px;
}

.hscroll {
    flex: 1;
    display: flex;
    align-items: center;
    justify-content: flex-end;
    padding-right: 91px;
}

.vgrip {
    width: 3px;
    height: 10px;
    margin-right: 13px;
    border-left: 1px solid #b0b0b0;
    border-right: 1px solid #b0b0b0;
}

.hscroll .thumb {
    width: 33%;
    min-width: 431px;
    height: 14px;
    margin-left: 8px;
    background-color: #f3f3f3;
    border: 1px solid #a8a8a8;
    border-radius: 7px;
}

.sidepane {
    width: 45px;
    padding: 10px 4px 15px 5px;
    border-left: 1px solid #d6d6d6;
    display: flex;
    flex-direction: column;
    align-items: center;
    flex-shrink: 0;
}

.sidepane .grip {
    width: 16px;
}

.cursor {
    margin-top: 20px;
}

.more {
    margin-top: auto;
    width: 100%;
    padding-top: 22px;
    border-top: 1px solid #cdcdcd;
}

/* status bar */
.status {
    height: 28px;
    display: flex;
    align-items: center;
    padding: 0 16px 0 14px;
    gap: 14px;
    flex-shrink: 0;
}

.status-tools {
    margin-left: auto;
    display: flex;
    align-items: center;
    gap: 2px;
}

.status-tools button {
    width: 24px;
    height: 24px;
}

.status-tools button.drop {
    width: 32px;
}

.status-tools .eye {
    margin-right: 8px;
}

.status-tools button.zoom {
    width: 52px;
    color: #555;
    font-family: "Noto Sans", sans-serif;
    justify-content: flex-start;
    padding-left: 8px;
}

.status-tools button:last-child {
    width: 12px;
}

.zoom-range {
    appearance: none;
    width: 139px;
    height: 14px;
    margin: 0 9px 0 3px;
    background: linear-gradient(#777, #777) center / 100% 1px no-repeat;
}

.zoom-range::-webkit-slider-thumb {
    appearance: none;
    width: 13px;
    height: 13px;
    border: 1px solid #444;
    border-radius: 50%;
    background-color: #f3f3f3;
}

/* taskbar */
.taskbar {
    height: 40px;
    display: flex;
    gap: 4px;
    padding-left: 17px;
    background: linear-gradient(#834a5c, #794153);
    flex-shrink: 0;
}

.app {
    width: 58px;
    border: 1px solid transparent;
}

.app.open {
    background-color: rgba(255, 255, 255, 0.2);
    border-color: #b795a1;
}

.app.stacked {
    width: 54px;
    margin-right: 4px;
    box-shadow: 4px 0 0 #8d5c6d, 5px 0 0 #b795a1;
}

.app.focus {
    background-color: rgba(255, 255, 255, 0.4);
    border-color: #efe4e8;
}

.adobe {
    width: 28px;
    height: 28px;
    margin: 4px 15px 0;
    border: 2px solid;
    font-family: "Noto Sans", sans-serif;
    font-size: 15px;
    font-weight: 600;
}

.pr {
    background-color: #2a0634;
    color: #d77af5;
}

.id {
    background-color: #390d1c;
    color: #f03d85;
}

.lr {
    background-color: #0f1a26;
    color: #accbe4;
}

.ps {
    background-color: #071e29;
    color: #2bbbe8;
}

.ai {
    background-color: #2a160a;
    color: #ef7b20;
}

.tray {
    margin-left: auto;
    display: flex;
    align-items: center;
    gap: 9px;
    padding: 2px 20px 0 0;
    color: #fff;
}

.ime {
    width: 20px;
    margin: 0 1px 0 5px;
    font-size: 14px;
    text-align: center;
}

.clock {
    margin-left: 5px;
    display: flex;
    flex-direction: column;
    align-items: center;
    font-family: "Noto Sans", sans-serif;
    line-height: 17px;
}

/* overlays */
.pointers {
    position: absolute;
    left: 0;
    top: 0;
    fill: #f01010;
    filter: drop-shadow(2px 3px 2px rgba(0, 0, 0, 0.5));
    pointer-events: none;
}

.watermark {
    position: absolute;
    right: 61px;
    bottom: 22px;
    pointer-events: none;
}

.activate {
    fill: #bdbdbd;
}

.act-big {
    font-size: 20px;
    font-weight: 300;
    fill: #a5a5a5;
}

.act-small {
    font-size: 14px;
    font-weight: 300;
    fill: #a5a5a5;
}

.brand {
    fill: rgba(255, 255, 255, 0.8);
    stroke: #c8c8c8;
    stroke-width: 1;
    font-weight: bold;
}

.brand-latin {
    font-family: "Liberation Sans", sans-serif;
    font-size: 53px;
}

.brand-cjk {
    font-size: 42px;
}

.site {
    font-family: "Liberation Sans", sans-serif;
    font-size: 30px;
    fill: rgba(255, 255, 255, 0.8);
    stroke: #d3c8cc;
    stroke-width: 0.5;
}
```
